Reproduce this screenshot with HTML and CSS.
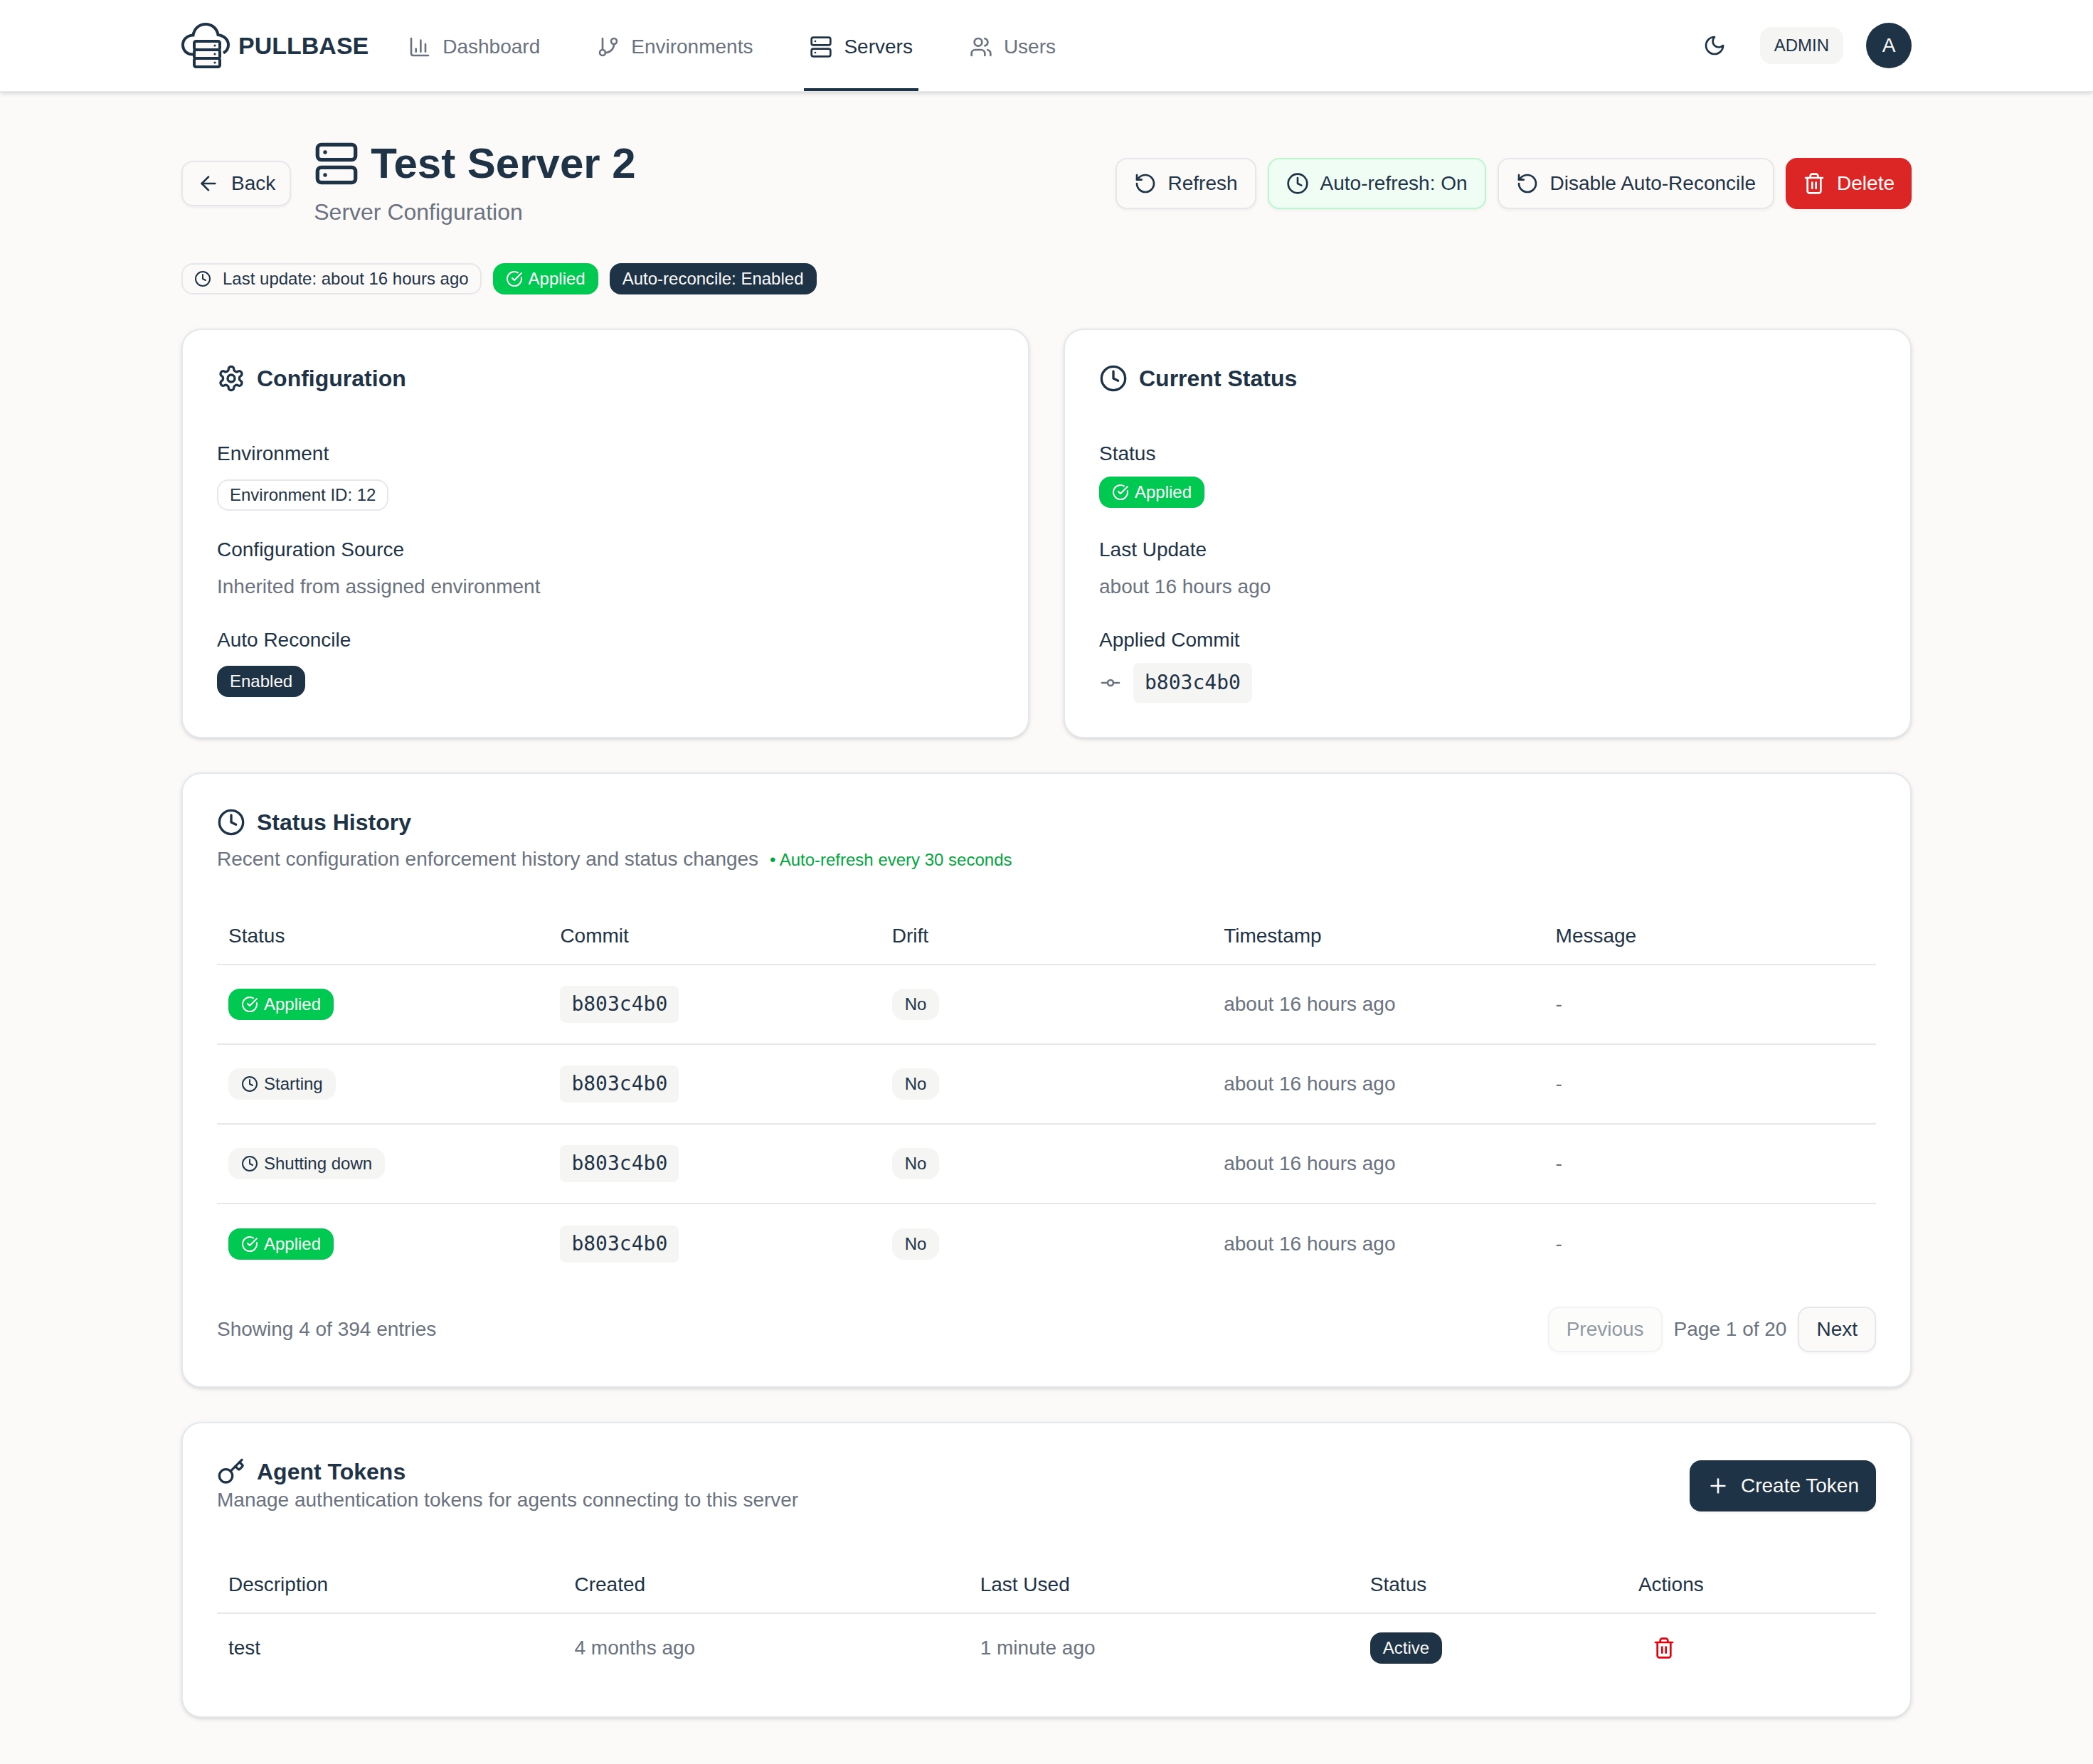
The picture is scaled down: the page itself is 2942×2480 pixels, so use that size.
FILE: index.html
```html
<!DOCTYPE html>
<html lang="en">
  <head>
    <meta charset="UTF-8" />
    <meta name="viewport" content="width=device-width, initial-scale=1.0" />
    <title>Test Server 2 - Pullbase</title>
    <link rel="stylesheet" href="styles.css">
  </head>
  <body>
    <!-- Icon sprite -->
    <svg class="sprite" aria-hidden="true">
      <symbol id="i-chart" viewBox="0 0 24 24">
        <path d="M3 3v16a2 2 0 0 0 2 2h16" /><path d="M18 17V9" /><path d="M13 17V5" /><path d="M8 17v-3" />
      </symbol>
      <symbol id="i-branch" viewBox="0 0 24 24">
        <path d="M6 3v12" /><circle cx="18" cy="6" r="3" /><circle cx="6" cy="18" r="3" /><path d="M18 9a9 9 0 0 1-9 9" />
      </symbol>
      <symbol id="i-server" viewBox="0 0 24 24">
        <rect width="20" height="8" x="2" y="2" rx="2" /><rect width="20" height="8" x="2" y="14" rx="2" />
        <path d="M6 6h.01" /><path d="M6 18h.01" />
      </symbol>
      <symbol id="i-users" viewBox="0 0 24 24">
        <path d="M16 21v-2a4 4 0 0 0-4-4H6a4 4 0 0 0-4 4v2" /><circle cx="9" cy="7" r="4" />
        <path d="M22 21v-2a4 4 0 0 0-3-3.87" /><path d="M16 3.13a4 4 0 0 1 0 7.75" />
      </symbol>
      <symbol id="i-moon" viewBox="0 0 24 24">
        <path d="M12 3a6 6 0 0 0 9 9 9 9 0 1 1-9-9Z" />
      </symbol>
      <symbol id="i-back" viewBox="0 0 24 24">
        <path d="m12 19-7-7 7-7" /><path d="M19 12H5" />
      </symbol>
      <symbol id="i-rotate" viewBox="0 0 24 24">
        <path d="M3 12a9 9 0 1 0 9-9 9.75 9.75 0 0 0-6.74 2.74L3 8" /><path d="M3 3v5h5" />
      </symbol>
      <symbol id="i-clock" viewBox="0 0 24 24">
        <circle cx="12" cy="12" r="10" /><path d="M12 6v6l4 2" />
      </symbol>
      <symbol id="i-trash" viewBox="0 0 24 24">
        <path d="M3 6h18" /><path d="M19 6v14c0 1-1 2-2 2H7c-1 0-2-1-2-2V6" /><path d="M8 6V4c0-1 1-2 2-2h4c1 0 2 1 2 2v2" />
        <path d="M10 11v6" /><path d="M14 11v6" />
      </symbol>
      <symbol id="i-check" viewBox="0 0 24 24">
        <path d="M21.801 10A10 10 0 1 1 17 3.335" /><path d="m9 11 3 3L22 4" />
      </symbol>
      <symbol id="i-gear" viewBox="0 0 24 24">
        <path d="M12.22 2h-.44a2 2 0 0 0-2 2v.18a2 2 0 0 1-1 1.73l-.43.25a2 2 0 0 1-2 0l-.15-.08a2 2 0 0 0-2.73.73l-.22.38a2 2 0 0 0 .73 2.73l.15.1a2 2 0 0 1 1 1.72v.51a2 2 0 0 1-1 1.74l-.15.09a2 2 0 0 0-.73 2.73l.22.38a2 2 0 0 0 2.73.73l.15-.08a2 2 0 0 1 2 0l.43.25a2 2 0 0 1 1 1.73V20a2 2 0 0 0 2 2h.44a2 2 0 0 0 2-2v-.18a2 2 0 0 1 1-1.73l.43-.25a2 2 0 0 1 2 0l.15.08a2 2 0 0 0 2.73-.73l.22-.39a2 2 0 0 0-.73-2.73l-.15-.08a2 2 0 0 1-1-1.74v-.5a2 2 0 0 1 1-1.74l.15-.09a2 2 0 0 0 .73-2.73l-.22-.38a2 2 0 0 0-2.73-.73l-.15.08a2 2 0 0 1-2 0l-.43-.25a2 2 0 0 1-1-1.73V4a2 2 0 0 0-2-2z" />
        <circle cx="12" cy="12" r="3" />
      </symbol>
      <symbol id="i-commit" viewBox="0 0 24 24">
        <circle cx="12" cy="12" r="3" /><path d="M3 12h6" /><path d="M15 12h6" />
      </symbol>
      <symbol id="i-key" viewBox="0 0 24 24">
        <path d="m15.5 7.5 2.3 2.3a1 1 0 0 0 1.4 0l2.1-2.1a1 1 0 0 0 0-1.4L19 4" /><path d="m21 2-9.6 9.6" />
        <circle cx="7.5" cy="15.5" r="5.5" />
      </symbol>
      <symbol id="i-plus" viewBox="0 0 24 24">
        <path d="M5 12h14" /><path d="M12 5v14" />
      </symbol>
    </svg>

    <header class="topbar">
      <div class="container topbar-inner">
        <a href="#" class="brand">
          <svg class="logo" viewBox="0 0 68 64" aria-hidden="true">
            <path class="logo-line" d="M17 44.500C8 45 2 39 2 31C2 24 7 18 16.500 17.500C18 8 25 2 34 2C43 2 50 8 51.500 17C60 18 66 24 66 31C66 36 63.500 40 59 42.500" />
            <rect class="logo-unit" x="18" y="26" width="36" height="12" rx="2.500" />
            <rect class="logo-unit" x="18" y="38" width="36" height="12" rx="2.500" />
            <rect class="logo-unit" x="18" y="50" width="36" height="12" rx="2.500" />
            <circle class="logo-dot" cx="47" cy="32" r="1.600" />
            <circle class="logo-dot" cx="47" cy="44" r="1.600" />
            <circle class="logo-dot" cx="47" cy="56" r="1.600" />
          </svg>
          <span>PULLBASE</span>
        </a>
        <nav class="nav">
          <a href="#" class="nav-link"><svg class="icon"><use href="#i-chart" /></svg>Dashboard</a>
          <a href="#" class="nav-link"><svg class="icon"><use href="#i-branch" /></svg>Environments</a>
          <a href="#" class="nav-link active"><svg class="icon"><use href="#i-server" /></svg>Servers</a>
          <a href="#" class="nav-link"><svg class="icon"><use href="#i-users" /></svg>Users</a>
        </nav>
        <div class="user-area">
          <button type="button" class="theme-button" aria-label="Toggle theme"><svg class="icon"><use href="#i-moon" /></svg></button>
          <span class="role">ADMIN</span>
          <button type="button" class="avatar">A</button>
        </div>
      </div>
    </header>

    <main class="container main">
      <div class="page-head">
        <div class="page-head-left">
          <button type="button" class="button small"><svg class="icon"><use href="#i-back" /></svg>Back</button>
          <div>
            <h1 class="page-title"><svg class="icon"><use href="#i-server" /></svg>Test Server 2</h1>
            <p class="page-subtitle">Server Configuration</p>
          </div>
        </div>
        <div class="actions">
          <button type="button" class="button"><svg class="icon"><use href="#i-rotate" /></svg>Refresh</button>
          <button type="button" class="button button-on"><svg class="icon"><use href="#i-clock" /></svg>Auto-refresh: On</button>
          <button type="button" class="button"><svg class="icon"><use href="#i-rotate" /></svg>Disable Auto-Reconcile</button>
          <button type="button" class="button button-danger"><svg class="icon"><use href="#i-trash" /></svg>Delete</button>
        </div>
      </div>

      <div class="badges">
        <span class="badge outline wide"><svg class="icon"><use href="#i-clock" /></svg>Last update: about 16 hours ago</span>
        <span class="badge green"><svg class="icon"><use href="#i-check" /></svg>Applied</span>
        <span class="badge dark">Auto-reconcile: Enabled</span>
      </div>

      <div class="card-grid">
        <section class="card">
          <h2 class="card-title"><svg class="icon"><use href="#i-gear" /></svg>Configuration</h2>
          <dl class="fields">
            <div class="field">
              <dt>Environment</dt>
              <dd class="badge-line"><span class="badge outline">Environment ID: 12</span></dd>
            </div>
            <div class="field">
              <dt>Configuration Source</dt>
              <dd class="muted">Inherited from assigned environment</dd>
            </div>
            <div class="field">
              <dt>Auto Reconcile</dt>
              <dd class="badge-line"><span class="badge dark">Enabled</span></dd>
            </div>
          </dl>
        </section>

        <section class="card">
          <h2 class="card-title"><svg class="icon"><use href="#i-clock" /></svg>Current Status</h2>
          <dl class="fields">
            <div class="field">
              <dt>Status</dt>
              <dd class="status-line"><span class="badge green"><svg class="icon"><use href="#i-check" /></svg>Applied</span></dd>
            </div>
            <div class="field">
              <dt>Last Update</dt>
              <dd class="muted">about 16 hours ago</dd>
            </div>
            <div class="field">
              <dt>Applied Commit</dt>
              <dd class="commit-line"><svg class="icon"><use href="#i-commit" /></svg><code class="code">b803c4b0</code></dd>
            </div>
          </dl>
        </section>
      </div>

      <section class="card">
        <h2 class="card-title"><svg class="icon"><use href="#i-clock" /></svg>Status History</h2>
        <p class="card-text spaced">Recent configuration enforcement history and status changes <span class="live">• Auto-refresh every 30 seconds</span></p>
        <table class="table history">
          <thead>
            <tr><th>Status</th><th>Commit</th><th>Drift</th><th>Timestamp</th><th>Message</th></tr>
          </thead>
          <tbody>
            <tr>
              <td><span class="badge green"><svg class="icon"><use href="#i-check" /></svg>Applied</span></td>
              <td><code class="code compact">b803c4b0</code></td>
              <td><span class="badge soft">No</span></td>
              <td class="muted">about 16 hours ago</td>
              <td class="muted">-</td>
            </tr>
            <tr>
              <td><span class="badge soft"><svg class="icon"><use href="#i-clock" /></svg>Starting</span></td>
              <td><code class="code compact">b803c4b0</code></td>
              <td><span class="badge soft">No</span></td>
              <td class="muted">about 16 hours ago</td>
              <td class="muted">-</td>
            </tr>
            <tr>
              <td><span class="badge soft"><svg class="icon"><use href="#i-clock" /></svg>Shutting down</span></td>
              <td><code class="code compact">b803c4b0</code></td>
              <td><span class="badge soft">No</span></td>
              <td class="muted">about 16 hours ago</td>
              <td class="muted">-</td>
            </tr>
            <tr>
              <td><span class="badge green"><svg class="icon"><use href="#i-check" /></svg>Applied</span></td>
              <td><code class="code compact">b803c4b0</code></td>
              <td><span class="badge soft">No</span></td>
              <td class="muted">about 16 hours ago</td>
              <td class="muted">-</td>
            </tr>
          </tbody>
        </table>
        <div class="table-footer">
          <span>Showing 4 of 394 entries</span>
          <div class="pager">
            <button type="button" class="button small" disabled>Previous</button>
            <span>Page 1 of 20</span>
            <button type="button" class="button small">Next</button>
          </div>
        </div>
      </section>

      <section class="card">
        <div class="card-head">
          <div>
            <h2 class="card-title"><svg class="icon"><use href="#i-key" /></svg>Agent Tokens</h2>
            <p class="card-text">Manage authentication tokens for agents connecting to this server</p>
          </div>
          <button type="button" class="button button-primary"><svg class="icon"><use href="#i-plus" /></svg>Create Token</button>
        </div>
        <table class="table tokens">
          <thead>
            <tr><th>Description</th><th>Created</th><th>Last Used</th><th>Status</th><th>Actions</th></tr>
          </thead>
          <tbody>
            <tr>
              <td>test</td>
              <td class="muted">4 months ago</td>
              <td class="muted">1 minute ago</td>
              <td><span class="badge dark">Active</span></td>
              <td><button type="button" class="icon-button" aria-label="Delete token"><svg class="icon"><use href="#i-trash" /></svg></button></td>
            </tr>
          </tbody>
        </table>
      </section>
    </main>
  </body>
</html>
```

FILE: styles.css
```css
:root {
  --bg: #fbfaf9;
  --card: #ffffff;
  --ink: #1f3347;
  --muted: #6b7280;
  --border: #e5e7eb;
  --soft: #f5f5f4;
  --green: #00c951;
}
* {
  box-sizing: border-box;
}
body {
  margin: 0;
  min-height: 100vh;
  font-family: "Liberation Sans", Arial, sans-serif;
  font-size: 28px;
  line-height: 40px;
  color: var(--ink);
  background-color: var(--bg);
}
h1,
h2,
p,
dl,
dd {
  margin: 0;
}
a {
  color: inherit;
  text-decoration: none;
}
button {
  font: inherit;
  color: inherit;
  cursor: pointer;
}
.sprite {
  display: none;
}
.icon {
  width: 32px;
  height: 32px;
  flex-shrink: 0;
  fill: none;
  stroke: currentColor;
  stroke-width: 2;
  stroke-linecap: round;
  stroke-linejoin: round;
}
.container {
  max-width: 2560px;
  margin: 0 auto;
  padding: 0 64px;
}
.muted {
  color: var(--muted);
}

/* Top bar */
.topbar {
  background-color: var(--card);
  border-bottom: 2px solid var(--border);
  box-shadow: 0 2px 6px rgba(0, 0, 0, 0.1), 0 2px 4px -2px rgba(0, 0, 0, 0.1);
}
.topbar-inner {
  display: flex;
  height: 128px;
}
.brand {
  display: flex;
  align-items: center;
  gap: 12px;
  margin-right: 48px;
  font-size: 34px;
  font-weight: 700;
}
.logo {
  width: 68px;
  height: 64px;
}
.logo-line {
  fill: none;
  stroke: var(--ink);
  stroke-width: 4;
}
.logo-unit {
  fill: var(--bg);
  stroke: var(--ink);
  stroke-width: 4;
}
.logo-dot {
  fill: var(--ink);
}
.nav {
  display: flex;
  gap: 64px;
}
.nav-link {
  display: flex;
  align-items: center;
  gap: 16px;
  padding: 8px 8px 0;
  color: var(--muted);
  border-bottom: 4px solid transparent;
}
.nav-link.active {
  color: var(--ink);
  border-bottom-color: var(--ink);
}
.user-area {
  display: flex;
  align-items: center;
  gap: 32px;
  margin-left: auto;
}
.theme-button {
  display: flex;
  padding: 16px;
  border: none;
  background: none;
}
.role {
  padding: 6px 20px;
  border-radius: 16px;
  font-size: 24px;
  background-color: var(--soft);
}
.avatar {
  width: 64px;
  height: 64px;
  padding: 0;
  border: none;
  border-radius: 50%;
  color: var(--bg);
  background-color: var(--ink);
}

/* Page head */
.main {
  display: flex;
  flex-direction: column;
  gap: 48px;
  padding-top: 64px;
  padding-bottom: 64px;
}
.page-head,
.page-head-left,
.actions {
  display: flex;
  align-items: center;
}
.page-head {
  justify-content: space-between;
}
.page-head-left {
  gap: 32px;
}
.actions {
  gap: 16px;
}
.page-title {
  display: flex;
  align-items: center;
  gap: 16px;
  margin-bottom: 8px;
  font-size: 60px;
  line-height: 72px;
}
.page-title .icon {
  width: 64px;
  height: 64px;
}
.page-subtitle {
  font-size: 32px;
  line-height: 48px;
  color: var(--muted);
}

/* Buttons */
.button {
  display: flex;
  align-items: center;
  justify-content: center;
  gap: 16px;
  height: 72px;
  padding: 0 24px;
  border: 2px solid var(--border);
  border-radius: 16px;
  white-space: nowrap;
  background-color: var(--bg);
  box-shadow: 0 2px 4px rgba(0, 0, 0, 0.05);
}
.button.small {
  height: 64px;
}
.page-head-left .button.small {
  padding: 0 20px;
}
.button:disabled {
  opacity: 0.5;
  cursor: default;
}
.button-on {
  border-color: #b9f8cf;
  background-color: #f0fdf4;
}
.button-danger {
  border: none;
  color: #ffffff;
  background-color: #dc2626;
}
.button-primary {
  border: none;
  color: var(--bg);
  background-color: var(--ink);
}
.icon-button {
  display: flex;
  padding: 16px 20px;
  border: none;
  color: #e7000b;
  background: none;
}

/* Badges */
.badges {
  display: flex;
  gap: 16px;
}
.badge {
  display: inline-flex;
  align-items: center;
  gap: 8px;
  height: 44px;
  padding: 0 16px;
  border: 2px solid transparent;
  border-radius: 16px;
  font-size: 24px;
  white-space: nowrap;
  vertical-align: middle;
}
.badge .icon {
  width: 24px;
  height: 24px;
}
.badge.wide {
  gap: 16px;
}
.badge.outline {
  border-color: var(--border);
}
.badge.green {
  color: #ffffff;
  background-color: var(--green);
}
.badge.dark {
  color: var(--bg);
  background-color: var(--ink);
}
.badge.soft {
  background-color: var(--soft);
}

/* Cards */
.card-grid {
  display: grid;
  grid-template-columns: 1fr 1fr;
  gap: 48px;
}
.card {
  padding: 48px;
  border: 2px solid var(--border);
  border-radius: 28px;
  background-color: var(--card);
  box-shadow: 0 2px 6px rgba(0, 0, 0, 0.1), 0 2px 4px -2px rgba(0, 0, 0, 0.1);
}
.card-head {
  display: flex;
  align-items: center;
  justify-content: space-between;
}
.card-title {
  display: flex;
  align-items: center;
  gap: 16px;
  font-size: 32px;
  line-height: 40px;
}
.card-title .icon {
  width: 40px;
  height: 40px;
}
.card-text {
  color: var(--muted);
}
.card-text.spaced {
  margin: 12px 0 48px;
}
.live {
  margin-left: 8px;
  font-size: 24px;
  color: #00a63e;
}
.fields {
  display: flex;
  flex-direction: column;
  gap: 35px;
  margin-top: 66px;
}
.field {
  display: flex;
  flex-direction: column;
  gap: 12px;
}
.badge-line,
.status-line,
.commit-line {
  display: flex;
  align-items: center;
}
.badge-line {
  padding-top: 4px;
}
.status-line {
  padding-bottom: 4px;
}
.commit-line {
  gap: 16px;
}
.commit-line .icon {
  color: var(--muted);
}
.code {
  padding: 8px 16px;
  border-radius: 8px;
  font-family: "DejaVu Sans Mono", monospace;
  font-size: 28px;
  background-color: var(--soft);
}
.code.compact {
  display: inline-block;
  padding: 6px 16px;
  vertical-align: middle;
}

/* Tables */
.table {
  width: 100%;
  border-spacing: 0;
}
.history {
  table-layout: fixed;
}
.table th,
.table td {
  padding: 0 16px;
  text-align: left;
  font-weight: 400;
  white-space: nowrap;
}
.table th {
  height: 80px;
  border-bottom: 2px solid var(--border);
}
.history td {
  height: 112px;
  border-bottom: 2px solid var(--border);
}
.history tr:last-child td {
  border-bottom: none;
}
.tokens {
  margin-top: 60px;
}
.tokens td {
  height: 96px;
}
.table-footer,
.pager {
  display: flex;
  align-items: center;
}
.table-footer {
  justify-content: space-between;
  margin-top: 32px;
  color: var(--muted);
}
.pager {
  gap: 16px;
}
.pager .button {
  color: var(--ink);
}
```
